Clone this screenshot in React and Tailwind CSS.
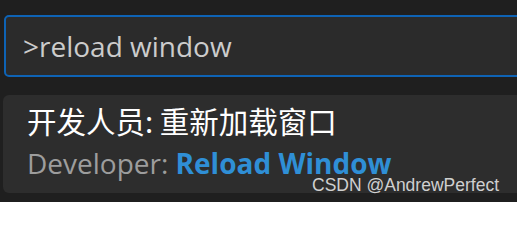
import React from "react";

function App() {
  return (
    <div className="relative w-[517px] h-[202px] overflow-hidden bg-[#1f1f1f] font-['Open_Sans','Noto_Sans_CJK_SC',sans-serif]">
      <div className="pt-[15px] pl-[4px] w-[540px]">
        <div className="h-[62px] flex items-center pl-[17px] border-2 border-[#0e63b5] rounded-[5px] bg-[#2b2b2b] text-[28px] text-[#cccccc]">
          &gt;reload window
        </div>
      </div>
      <div className="mt-[18px] ml-[3px] w-[540px] h-[98px] rounded-[6px] bg-[#2d2d2d] pl-[24px] pt-[7px]">
        <div className="text-[29.5px] leading-[36px] text-white font-['Noto_Sans_CJK_SC',sans-serif]">
          开发人员: 重新加载窗口
        </div>
        <div className="mt-[7px] text-[28px] leading-[36px] text-[#9d9d9d]">
          Developer: <span className="font-bold text-[#2f8fd6]">Reload Window</span>
        </div>
      </div>
      <div className="absolute left-[312px] top-[176px] text-[17.5px] leading-[18px] text-[#d0d0d0] font-['Liberation_Sans',sans-serif]">
        CSDN @AndrewPerfect
      </div>
    </div>
  );
}

export default App;
